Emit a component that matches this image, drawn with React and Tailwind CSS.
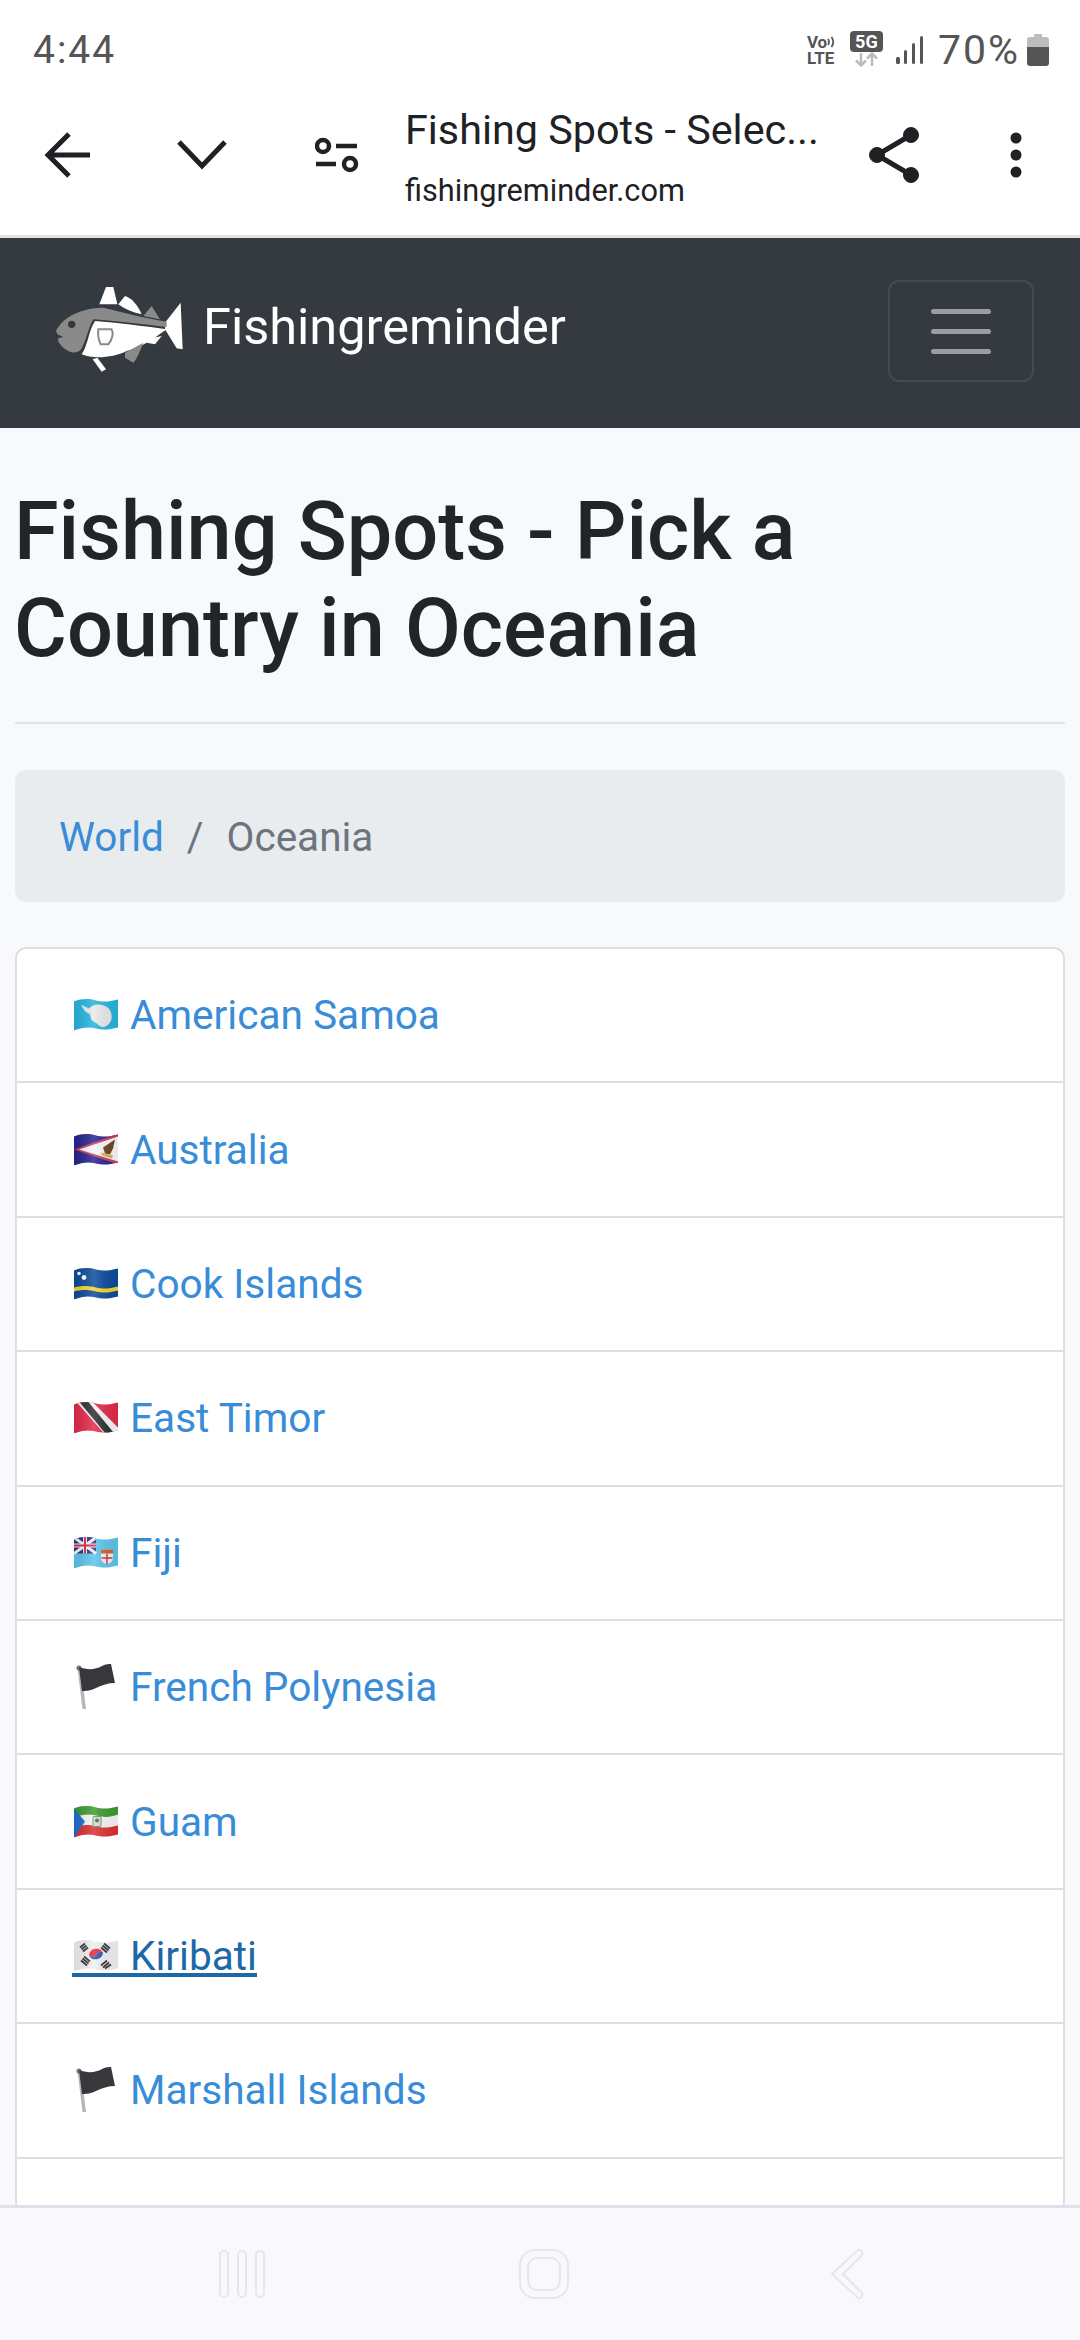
const WAVE =
  "M0 3 C8 0 14 0 22 2 C30 4 36 3 44 1 L44 29 C36 31 30 32 22 30 C14 28 8 29 0 32 Z";

// emoji style flags, all drawn in the same 44x34 wavy box
const Flag = ({ id, children }) => (
  <svg width="44" height="34" viewBox="0 0 44 33" className="shrink-0">
    <defs>
      <clipPath id={`wave-${id}`}>
        <path d={WAVE} />
      </clipPath>
      <linearGradient id={`shine-${id}`} x1="0" y1="0" x2="1" y2="0">
        <stop offset="0" stopColor="#000" stopOpacity="0.08" />
        <stop offset="0.45" stopColor="#fff" stopOpacity="0.16" />
        <stop offset="1" stopColor="#000" stopOpacity="0.05" />
      </linearGradient>
    </defs>
    <g clipPath={`url(#wave-${id})`}>
      {children}
      <rect width="44" height="34" fill={`url(#shine-${id})`} />
    </g>
  </svg>
);

const Antarctica = () => (
  <Flag id="aq">
    <rect width="44" height="34" fill="#26b4de" />
    <path
      d="M7 6 L15 10 C19 5 27 5 32 8 C38 11 39 20 36 24 C33 29 27 30 24 26 C21 23 20 24 18 22 C16 19 17 17 15 15 C11 14 9 10 7 6 Z"
      fill="#e6e8ea"
    />
  </Flag>
);

const AmSamoa = () => (
  <Flag id="as">
    <rect width="44" height="34" fill="#25238f" />
    <path d="M44 0 L0 16 L44 31 Z" fill="#c8395c" />
    <path d="M44 3 L5 16 L44 28 Z" fill="#f6f6f8" />
    <path d="M29 14 L41 6 L39 15 L36 21 L31 20 Z" fill="#6e4326" />
    <path d="M27 19 L39 22 L38 25 L28 22 Z" fill="#d9b24a" />
  </Flag>
);

const Curacao = () => (
  <Flag id="cw">
    <rect width="44" height="34" fill="#0b4a9c" />
    <path d="M0 20 C8 18 14 18 22 20 C30 22 36 21 44 19 L44 23 C36 25 30 26 22 24 C14 22 8 22 0 24 Z" fill="#f5d327" />
    <circle cx="5" cy="6" r="1.8" fill="#fff" />
    <circle cx="10" cy="10" r="2.4" fill="#fff" />
  </Flag>
);

const Trinidad = () => (
  <Flag id="tt">
    <rect width="44" height="34" fill="#e2294a" />
    <path d="M2 0 L18 0 L44 26 L44 34 L32 34 Z" fill="#f5f5f5" />
    <path d="M5 0 L14 0 L42 34 L33 34 Z" fill="#2e2e30" />
  </Flag>
);

const Fiji = () => (
  <Flag id="fj">
    <rect width="44" height="34" fill="#5cc4ec" />
    <rect width="22" height="17" y="0" fill="#27337f" />
    <path d="M0 1 L22 17 M22 1 L0 17" stroke="#f4f4f6" strokeWidth="3" />
    <path d="M11 0 V17 M0 9 H22" stroke="#f4f4f6" strokeWidth="4" />
    <path d="M11 0 V17 M0 9 H22" stroke="#d3274a" strokeWidth="2" />
    <path d="M27 13 H39 V22 C39 25 35 27 33 28 C31 27 27 25 27 22 Z" fill="#f2f2f4" />
    <path d="M27 13 H39 V17 H27 Z" fill="#c8642f" />
    <path d="M33 17 V28 M27.5 21.5 H38.5" stroke="#d3274a" strokeWidth="1.4" />
  </Flag>
);

const EqGuinea = () => (
  <Flag id="gq">
    <rect width="44" height="34" fill="#f5f5f6" />
    <path d="M0 0 H44 V9 C36 12 30 12 22 10 C14 8 8 9 0 12 Z" fill="#3c9a2e" />
    <path d="M0 22 C8 19 14 19 22 21 C30 23 36 22 44 20 V34 H0 Z" fill="#dc2f30" />
    <path d="M0 3 L11 16 L0 32 Z" fill="#1f6fd0" />
    <rect x="19" y="11" width="8" height="10" rx="1" fill="#d7dcd5" stroke="#6f8a68" strokeWidth="1" />
    <circle cx="23" cy="15" r="2" fill="#3c7a2e" />
  </Flag>
);

const Korea = () => (
  <Flag id="kr">
    <rect width="44" height="34" fill="#f0f0f2" />
    <path d="M15 16 A7.5 7.5 0 0 1 29 13 C27 11 25 12 24 14 C22 17 17 19 15 16 Z" fill="#e02c3c" />
    <path d="M15 16 C17 19 22 17 24 14 C25 12 27 11 29 13 A7.5 7.5 0 0 1 15 16 Z" fill="#2750b8" />
    <path d="M6 8 L11 4 M7.5 10 L12.5 6 M9 12 L14 8" stroke="#333335" strokeWidth="1.8" />
    <path d="M30 4 L36 9 M28.5 6 L34.5 11 M27 8 L33 13" stroke="#333335" strokeWidth="1.8" />
    <path d="M7 21 L13 26 M8.5 19 L14.5 24 M10 17 L16 22" stroke="#333335" strokeWidth="1.8" />
    <path d="M27 26 L33 21 M29 28 L35 23 M31 29 L37 25" stroke="#333335" strokeWidth="1.8" />
  </Flag>
);

const BlackFlag = () => (
  <svg width="44" height="46" viewBox="0 0 44 46" className="shrink-0">
    <path d="M3.5 4 L7 4 L12 45 L8.5 45 Z" fill="#b5b5ba" />
    <circle cx="5" cy="4" r="2.6" fill="#77777c" />
    <path
      d="M5 3 C13 6 21 6 28 2 C32 0 35 0 37 0 L41 19 C34 19 28 21 22 24 C16 27 11 27 8 27 Z"
      fill="#38373c"
    />
  </svg>
);

const countries = [
  { name: "American Samoa", flag: <Antarctica /> },
  { name: "Australia", flag: <AmSamoa /> },
  { name: "Cook Islands", flag: <Curacao /> },
  { name: "East Timor", flag: <Trinidad /> },
  { name: "Fiji", flag: <Fiji /> },
  { name: "French Polynesia", flag: <BlackFlag /> },
  { name: "Guam", flag: <EqGuinea /> },
  { name: "Kiribati", flag: <Korea />, hover: true },
  { name: "Marshall Islands", flag: <BlackFlag /> },
];

const StatusBar = () => (
  <div className="h-[75px] bg-white flex items-center justify-between pl-[33px] pr-[31px] text-[#555]">
    <span className="text-[39px] tracking-[2px] mt-[25px] leading-none">4:44</span>
    <div className="flex items-center mt-[25px]">
      <div className="flex flex-col text-[17px] font-bold leading-[16px] w-[31px] mr-[12px]">
        <span className="flex items-center">
          Vo
          <svg width="8" height="14" viewBox="0 0 8 14" fill="none" stroke="#555" strokeWidth="1.8">
            <path d="M1 4 Q3 7 1 10 M4.5 2 Q8 7 4.5 12" />
          </svg>
        </span>
        <span>LTE</span>
      </div>
      <div className="flex flex-col items-center mr-[13px] mt-[-2px]">
        <span className="bg-[#555] text-white text-[18px] font-bold leading-[21px] w-[33px] text-center rounded-[4px]">
          5G
        </span>
        <svg width="26" height="15" viewBox="0 0 26 15">
          <path d="M8 1 V13 M3 8.5 L8 13.5 L13 8.5" stroke="#bbb" strokeWidth="2.5" fill="none" />
          <path d="M19 14 V2 M14 6.5 L19 1.5 L24 6.5" stroke="#bbb" strokeWidth="2.5" fill="none" />
        </svg>
      </div>
      <svg width="28" height="30" viewBox="0 0 28 30" className="mr-[14px]">
        <rect x="0" y="22" width="4" height="7" rx="1.5" fill="#555" />
        <rect x="8" y="15" width="3" height="14" rx="1.5" fill="#555" />
        <rect x="16" y="8" width="3" height="21" rx="1.5" fill="#555" />
        <rect x="24" y="1" width="3" height="28" rx="1.5" fill="#555" />
      </svg>
      <span className="text-[41px] tracking-[2px] leading-none mr-[7px]">70%</span>
      <svg width="22" height="32" viewBox="0 0 22 32">
        <path d="M7 0 H15 V3 H19 Q22 3 22 6 V13 H0 V6 Q0 3 3 3 H7 Z" fill="#bdbdbd" />
        <path d="M0 13 H22 V29 Q22 32 19 32 H3 Q0 32 0 29 Z" fill="#555" />
      </svg>
    </div>
  </div>
);

const Toolbar = () => (
  <div className="h-[163px] bg-white flex items-center border-b-[3px] border-[#e2e2e2]">
    <div className="w-[135px] flex justify-center">
      <svg width="48" height="46" viewBox="0 0 48 46" fill="none" stroke="#202124" strokeWidth="5">
        <path d="M46 23 H4 M25 2 L4 23 L25 44" />
      </svg>
    </div>
    <div className="w-[134px] flex justify-center">
      <svg width="52" height="32" viewBox="0 0 52 32" fill="none" stroke="#202124" strokeWidth="5">
        <path d="M3 3 L26 27 L49 3" />
      </svg>
    </div>
    <div className="w-[136px] flex justify-center">
      <svg width="44" height="36" viewBox="0 0 44 36" fill="none" stroke="#202124" strokeWidth="4.5">
        <circle cx="8" cy="9" r="6" />
        <path d="M21 9 H42 M1 27 H21" />
        <circle cx="35" cy="27" r="6" />
      </svg>
    </div>
    <div className="w-[439px] text-[#202124] pt-[6px]">
      <p className="text-[41.3px] leading-[56px]">Fishing Spots - Selec...</p>
      <p className="text-[30.7px] leading-[46px] mt-[10px]">fishingreminder.com</p>
    </div>
    <div className="w-[100px] flex justify-center">
      <svg width="54" height="58" viewBox="0 0 54 58" fill="#202124" stroke="#202124">
        <path d="M44 9 L10 29 L44 49" fill="none" strokeWidth="5" />
        <circle cx="44" cy="9" r="7.5" />
        <circle cx="10" cy="29" r="7.5" />
        <circle cx="44" cy="49" r="7.5" />
      </svg>
    </div>
    <svg width="14" height="46" viewBox="0 0 14 46" fill="#202124" className="ml-[65px]">
      <circle cx="7" cy="6" r="5.5" />
      <circle cx="7" cy="23" r="5.5" />
      <circle cx="7" cy="40" r="5.5" />
    </svg>
  </div>
);

const FishLogo = () => (
  <svg width="170" height="130" viewBox="0 0 510 390" className="shrink-0">
    <path d="M208 130 L228 78 L250 78 L262 130 Z" fill="#fff" />
    <path d="M265 130 L285 105 C305 110 325 135 335 160 C310 155 285 145 265 130 Z" fill="#fff" />
    <path d="M340 165 L365 135 L390 175 Z" fill="#8a8a8a" />
    <path d="M405 185 L452 125 L458 265 L440 262 L405 205 Z" fill="#fff" />
    <path
      d="M78 210 C100 165 160 140 220 140 C280 155 340 170 410 182 L410 198 C340 190 260 180 190 175 C175 200 170 235 155 262 C150 275 130 278 115 270 C95 260 80 240 85 232 L100 228 L82 220 Z"
      fill="#8a8a8a"
    />
    <path
      d="M195 180 C260 185 340 195 410 205 C380 225 340 260 290 270 C250 290 190 295 155 280 C175 250 175 210 195 180 Z"
      fill="#fff"
    />
    <path
      d="M205 205 L245 205 C250 215 250 230 235 250 L212 250 C205 235 203 220 205 205 Z"
      fill="none"
      stroke="#8a8a8a"
      strokeWidth="6"
    />
    <path d="M285 275 L340 245 C330 270 320 295 310 305 L285 290 Z" fill="#8a8a8a" />
    <path d="M350 235 L395 225 L375 250 L350 245 Z" fill="#fff" />
    <path d="M188 295 L202 290 L228 325 L215 332 Z" fill="#fff" />
    <circle cx="125" cy="190" r="11" fill="#343a40" />
  </svg>
);

const Navbar = () => (
  <div className="h-[190px] bg-[#343a40] flex items-center justify-between pl-[30px] pr-[46px]">
    <div className="flex items-center mt-[-15px]">
      <FishLogo />
      <span className="text-[50.5px] text-white ml-[3px] mt-[3px] leading-none">Fishingreminder</span>
    </div>
    <div className="w-[146px] h-[102px] mt-[-4px] border-[2px] border-[#464b51] rounded-[11px] flex flex-col items-center justify-center gap-[15px]">
      <span className="block w-[60px] h-[5px] rounded-full bg-[#9a9da0]" />
      <span className="block w-[60px] h-[5px] rounded-full bg-[#9a9da0]" />
      <span className="block w-[60px] h-[5px] rounded-full bg-[#9a9da0]" />
    </div>
  </div>
);

const CountryRow = ({ country }) => (
  <div className="h-[134.4px] shrink-0 border-b-[2px] border-[#dfdfdf] flex items-center pl-[57px]">
    <a
      href="#"
      className={`flex items-center text-[40.6px] ${
        country.hover
          ? "leading-[34px] text-[#1d68a7] border-b-[4px] border-[#1d68a7] mt-[4px] pl-[2px] ml-[-2px]"
          : "leading-[50px] text-[#388cd8]"
      }`}
    >
      <span className="w-[44px] flex justify-center mr-[12px]">{country.flag}</span>
      {country.name}
    </a>
  </div>
);

const NavButtons = () => (
  <div className="h-[135px] bg-[#f9f9fd] border-t-[3px] border-[#e0e0ea] flex items-center shrink-0">
    <div className="absolute left-[219px] flex gap-[8px]">
      <span className="block w-[10px] h-[48px] rounded-full border-[2px] border-[#e6e6ec]" />
      <span className="block w-[10px] h-[48px] rounded-full border-[2px] border-[#e6e6ec]" />
      <span className="block w-[10px] h-[48px] rounded-full border-[2px] border-[#e6e6ec]" />
    </div>
    <div className="absolute left-[519px] w-[50px] h-[50px] rounded-[16px] border-[2px] border-[#e6e6ec] flex items-center justify-center">
      <span className="block w-[34px] h-[34px] rounded-[10px] border-[2px] border-[#e6e6ec]" />
    </div>
    <svg width="34" height="52" viewBox="0 0 34 52" className="absolute left-[830px]" fill="none" stroke="#e6e6ec" strokeWidth="2">
      <path d="M28 2 C30 1 33 3 32 7 L13 26 L32 45 C33 49 30 51 28 50 L2 26 Z" />
    </svg>
  </div>
);

export default function App() {
  return (
    <div className="relative w-[1080px] h-[2340px] overflow-hidden bg-[#f8f9fa] flex flex-col font-['Roboto',sans-serif]">
      <StatusBar />
      <Toolbar />
      <Navbar />
      <div className="flex-1 min-h-0 px-[15px] overflow-hidden">
        <h1 className="text-[81px] leading-[97px] font-medium text-[#212529] mt-[55px] -ml-[1px]">
          Fishing Spots - Pick a Country in Oceania
        </h1>
        <hr className="border-t-[2px] border-[#e1e2e3] mt-[45px]" />
        <div className="h-[132px] mt-[46px] pt-[2px] bg-[#e9ecef] rounded-[11px] flex items-center pl-[44px] text-[40.5px]">
          <a href="#" className="text-[#388cd8]">World</a>
          <span className="text-[#6c757d] mx-[23px]">/</span>
          <span className="text-[#6c757d]">Oceania</span>
        </div>
        <div className="mt-[45px] bg-white border-[2px] border-b-0 border-[#dfdfdf] rounded-t-[11px] flex flex-col h-[1400px]">
          {countries.map((c) => (
            <CountryRow key={c.name} country={c} />
          ))}
        </div>
      </div>
      <NavButtons />
    </div>
  );
}
